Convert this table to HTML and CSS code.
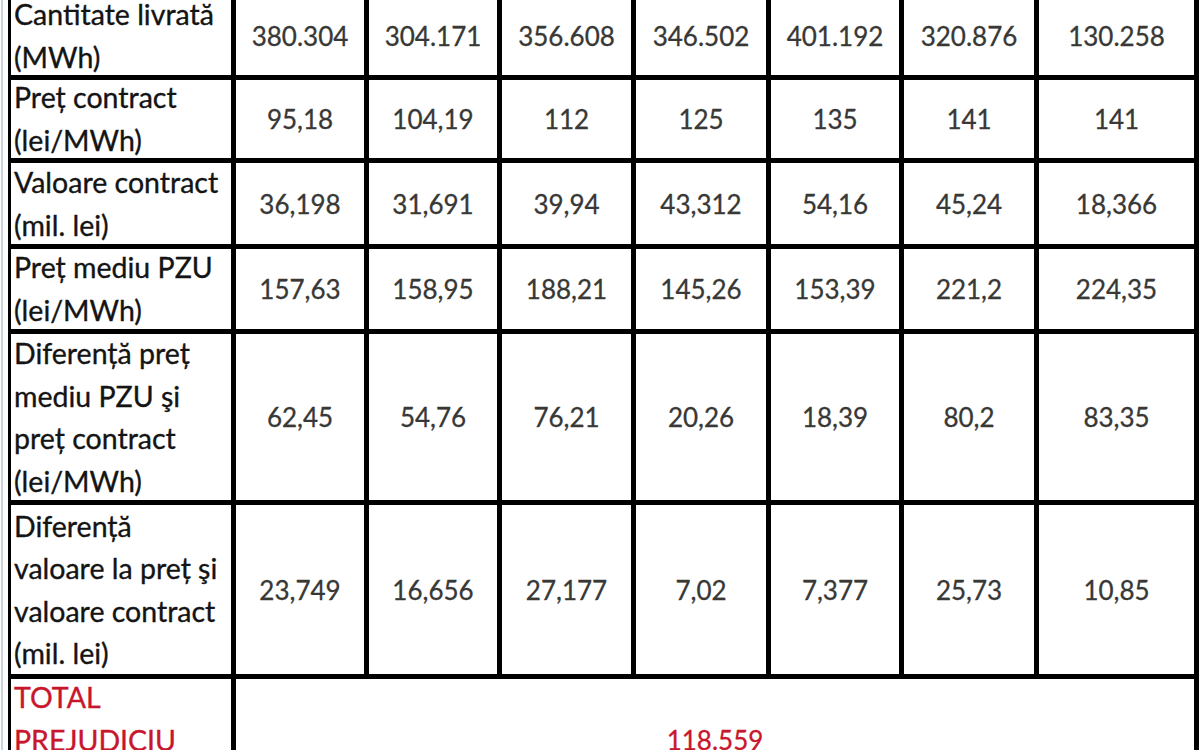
FILE: index.html
```html
<!DOCTYPE html>
<html lang="ro">
<head>
<meta charset="utf-8">
<title>Prejudiciu</title>
<link rel="stylesheet" href="styles.css">
</head>
<body>
<div class="page">
<table class="grid">
  <colgroup>
    <col class="c-label">
    <col class="c-a"><col class="c-a"><col class="c-b"><col class="c-c"><col class="c-a"><col class="c-c"><col class="c-last">
  </colgroup>
  <tbody>
    <tr class="r1">
      <td class="label"><div class="txt">Cantitate livrată<br>(MWh)</div></td>
      <td>380.304</td><td>304.171</td><td>356.608</td><td>346.502</td><td>401.192</td><td>320.876</td><td>130.258</td>
    </tr>
    <tr class="r2">
      <td class="label"><div class="txt">Preț contract<br>(lei/MWh)</div></td>
      <td>95,18</td><td>104,19</td><td>112</td><td>125</td><td>135</td><td>141</td><td>141</td>
    </tr>
    <tr class="r3">
      <td class="label"><div class="txt">Valoare contract<br>(mil. lei)</div></td>
      <td>36,198</td><td>31,691</td><td>39,94</td><td>43,312</td><td>54,16</td><td>45,24</td><td>18,366</td>
    </tr>
    <tr class="r4">
      <td class="label"><div class="txt">Preț mediu PZU<br>(lei/MWh)</div></td>
      <td>157,63</td><td>158,95</td><td>188,21</td><td>145,26</td><td>153,39</td><td>221,2</td><td>224,35</td>
    </tr>
    <tr class="r5">
      <td class="label"><div class="txt four">Diferență preț<br>mediu PZU şi<br>preț contract<br>(lei/MWh)</div></td>
      <td>62,45</td><td>54,76</td><td>76,21</td><td>20,26</td><td>18,39</td><td>80,2</td><td>83,35</td>
    </tr>
    <tr class="r6">
      <td class="label"><div class="txt four">Diferență<br>valoare la preț şi<br>valoare contract<br>(mil. lei)</div></td>
      <td>23,749</td><td>16,656</td><td>27,177</td><td>7,02</td><td>7,377</td><td>25,73</td><td>10,85</td>
    </tr>
    <tr class="r7">
      <td class="label total"><div class="txt">TOTAL<br>PREJUDICIU</div></td>
      <td class="total-value" colspan="7">118.559</td>
    </tr>
  </tbody>
</table>
</div>
</body>
</html>
```

FILE: styles.css
```css
html, body {
  margin: 0;
  padding: 0;
  background: #ffffff;
}

body {
  font-family: Lato, "Open Sans", "Liberation Sans", sans-serif;
  overflow: hidden;
}

.page {
  height: 750px;
  overflow: hidden;
  padding-left: 5px;
  border-left: 2px solid #c9d3dd;
  margin-left: 1px;
  box-sizing: border-box;
}

.grid {
  border-collapse: collapse;
  table-layout: fixed;
  width: 1188px;
  margin-top: -8px;
}

.c-label { width: 224px; }
.c-a { width: 133px; }
.c-b { width: 134px; }
.c-c { width: 135px; }
.c-last { width: 160px; }

.grid td {
  border: 5px solid #000000;
  padding: 0 2px;
  text-align: center;
  vertical-align: middle;
  font-size: 26px;
  line-height: 40px;
  color: #383836;
  white-space: nowrap;
  -webkit-text-stroke: 0.3px currentColor;
}

.grid td.label {
  text-align: left;
  color: #141414;
  font-size: 28.5px;
  padding-left: 3px;
  border-left-width: 3px;
  -webkit-text-stroke: 0.35px currentColor;
}

.txt {
  line-height: 43px;
  margin: -4px 0;
}

.txt.four {
  line-height: 42.5px;
  margin: -2px 0;
}

.r1 { height: 83px; }
.r2 { height: 83px; }
.r3 { height: 86px; }
.r4 { height: 85px; }
.r5 { height: 171px; }
.r6 { height: 174px; }
.r7 { height: 126px; }

.grid td.total {
  color: #c8162c;
  vertical-align: top;
  padding-top: 1px;
}

.grid td.total-value {
  color: #c8162c;
}
```
